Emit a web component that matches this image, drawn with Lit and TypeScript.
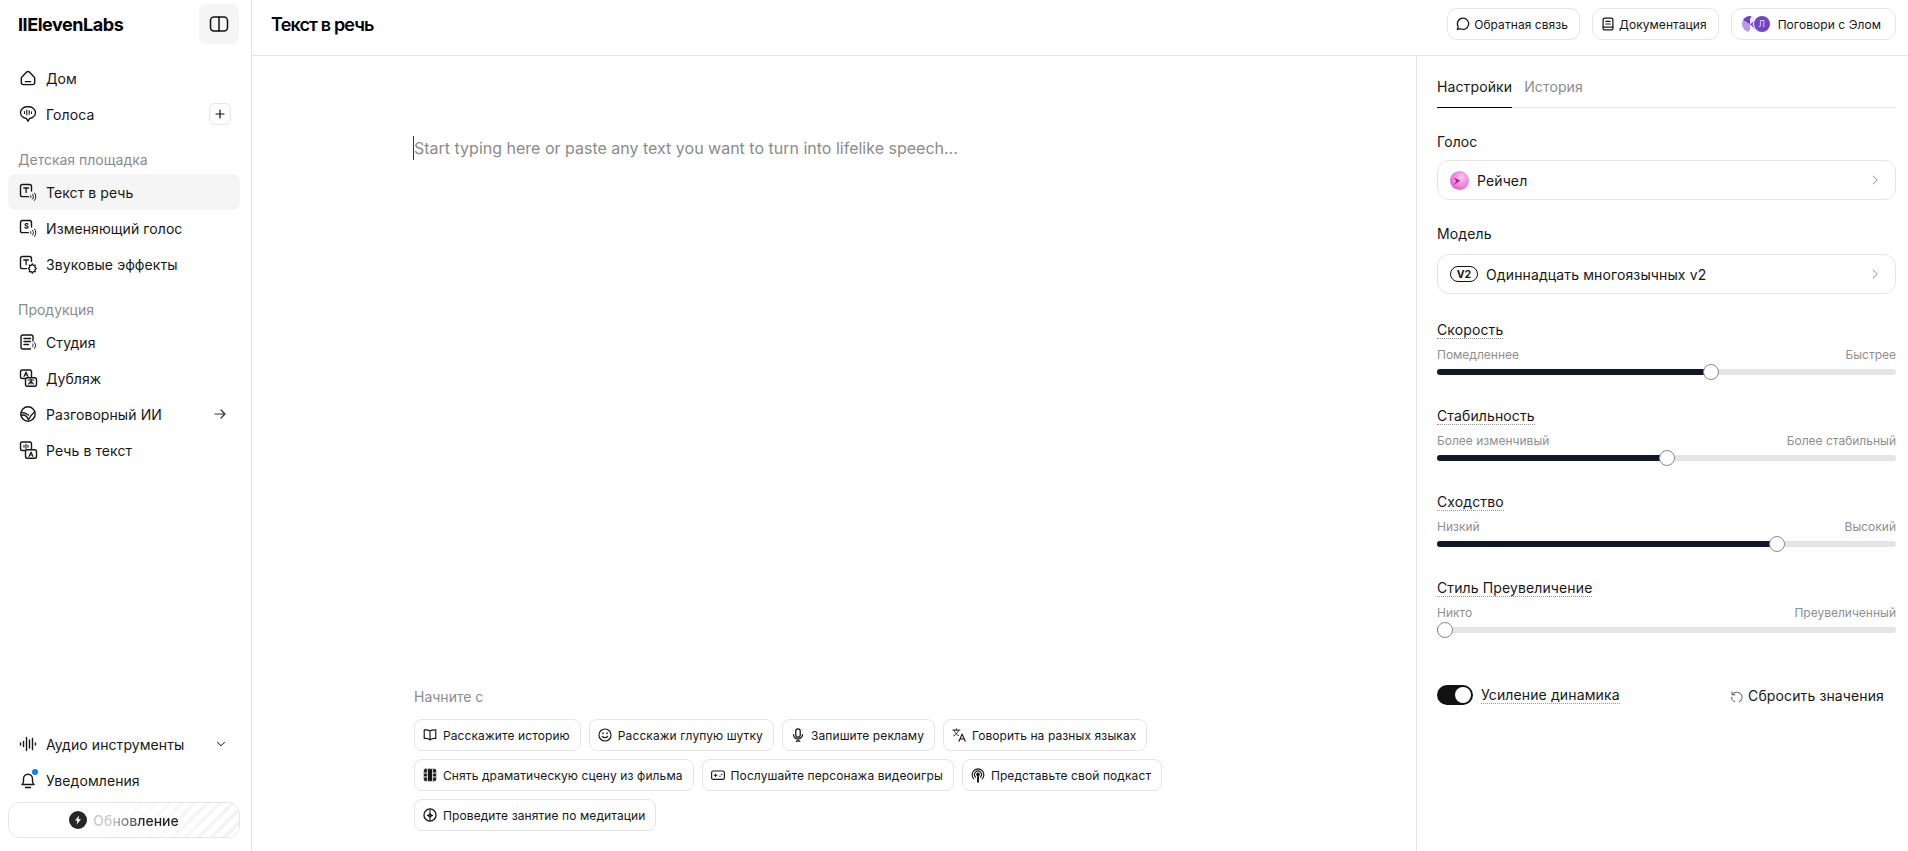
import { LitElement, html, css, svg, TemplateResult } from "lit";
import { customElement } from "lit/decorators.js";

const ic = (body: TemplateResult, size = 20, vb = 20, sw = 1.4) => html`<svg class="ic" width=${size} height=${size} viewBox="0 0 ${vb} ${vb}" fill="none" stroke="currentColor" stroke-width=${sw} stroke-linecap="round" stroke-linejoin="round">${body}</svg>`;

const waves = svg`<path d="M12.6 13.6c.5.6.5 1.6 0 2.2M14.6 12.3c1.1 1.4 1.1 3.4 0 4.8M16.6 11c1.6 2.2 1.6 5.2 0 7.4" stroke-width="1"/>`;
const box = svg`<path d="M10.5 14.6H4.4A1.9 1.9 0 0 1 2.5 12.7V4.4a1.9 1.9 0 0 1 1.9-1.9h7.2a1.9 1.9 0 0 1 1.9 1.9v4.6"/>`;

const icons: Record<string, TemplateResult> = {
  panel: ic(svg`<rect x="2.5" y="4" width="17" height="14" rx="3.5"/><path d="M11 4v14"/>`, 22, 22, 1.5),
  home: ic(svg`<path d="M3.7 9.2 8.4 4.2a2.2 2.2 0 0 1 3.2 0l4.7 5c.3.3.4.6.4 1v4.4a2 2 0 0 1-2 2H5.3a2 2 0 0 1-2-2v-4.4c0-.4.1-.7.4-1Z"/><path d="M7.3 13.6h5.4"/>`),
  voices: ic(svg`<path d="M10 2.5C5.7 2.5 2.500 5.200 2.500 8.600c0 3 2.700 5.300 5.800 5.800l1.700 2.800 1.700-2.800c3.100-.5 5.800-2.800 5.800-5.800 0-3.400-3.200-6.100-7.500-6.100Z"/><path d="M6.500 7.600v2M8.800 6v5M11.200 6.800v3.400M13.500 7.800v1.600" stroke-width="1.100"/>`),
  tts: ic(svg`${box}<path d="M5.800 6h4.600M8.100 6v4.600" stroke-width="1.300"/>${waves}`),
  vc: ic(svg`${box}<path d="M10 6.100c-.5-.6-2.900-.8-2.900.6 0 1.500 3 .8 3 2.300 0 1.400-2.500 1.200-3.200.5" stroke-width="1.200"/>${waves}`),
  sfx: ic(svg`<path d="M8.500 14.600H4.400A1.900 1.900 0 0 1 2.500 12.700V4.400a1.900 1.900 0 0 1 1.900-1.900h7.200a1.900 1.900 0 0 1 1.900 1.900v3"/><path d="M5.800 6h4.600M8.100 6v4.600" stroke-width="1.300"/><path d="m14.300 9.700 1 1.800 2-.3-.4 2 1.400 1.300-1.400 1.300.4 2-2-.3-1 1.800-1-1.800-2 .3.400-2-1.400-1.300 1.400-1.300-.4-2 2 .3Z" stroke-width="1.200"/>`),
  studio: ic(svg`<path d="M12.500 17H5a2 2 0 0 1-2-2V5a2 2 0 0 1 2-2h8a2 2 0 0 1 2 2v4"/><path d="M6 6.500h6.500M6 9.500h6.500M6 12.500h4.500"/><path d="M14.500 11.800c.8.9.8 2.400 0 3.300M16.500 10.500c1.400 1.700 1.400 4.300 0 6" stroke-width="1"/>`),
  dub: ic(svg`<rect x="2.500" y="2" width="11" height="8.500" rx="1.800"/><path d="m6 8.500 2-4.500 2 4.500M6.800 7h2.400" stroke-width="1.100"/><rect x="7.500" y="9.800" width="11" height="8.500" rx="1.800" fill="#fff"/><path d="M10 12h6M13 11v5M13 13.200l-2.500 3M13 13.200l2.500 3" stroke-width="1.100"/>`),
  conv: ic(svg`<circle cx="10" cy="10" r="7.200"/><path d="M3 11.200c3.500-.8 6 .8 7.500 4.500 1.600-3.500 3.300-5.500 6.200-8" /><path d="M3.300 8.500c2.800 0 5 .8 7.200 2.500"/>`),
  stt: ic(svg`<rect x="2.500" y="2" width="11" height="8.500" rx="1.800"/><path d="M8 4v4.500M6 5.200v2M10 5.200v2" stroke-width="1.100"/><rect x="7.500" y="9.800" width="11" height="8.500" rx="1.800" fill="#fff"/><path d="m11 16.500 2-4.500 2 4.500M11.800 15h2.400" stroke-width="1.100"/>`),
  audio: ic(svg`<path d="M2.500 9v2M5.500 7.500v5M8.500 3.500v13M11.500 6v8M14.500 4.500v11M17.500 9v2"/>`),
  bell: ic(svg`<path d="M4 14.500c.9-.8 1.500-1.800 1.500-3.200V8.800a4.500 4.500 0 0 1 9 0v2.500c0 1.400.6 2.400 1.500 3.200H4Z"/><path d="M7.500 17.500h5"/>`),
  plus: ic(svg`<path d="M8 3.500v9M3.500 8h9"/>`, 14, 16, 1.4),
  arrow: ic(svg`<path d="M3 8h10M9 4l4 4-4 4"/>`, 16, 16, 1.2),
  down: ic(svg`<path d="m4 6 4 4 4-4"/>`, 14, 16, 1.2),
  chev: ic(svg`<path d="m6 3.500 4.500 4.500L6 12.500"/>`, 14, 16, 1.2),
  msg: ic(svg`<path d="M9 2.500a6.300 6.300 0 1 1-3 11.800l-3.300.9.900-3.100A6.300 6.300 0 0 1 9 2.500Z"/>`, 16, 18, 1.4),
  doc: ic(svg`<rect x="3.500" y="2.500" width="11" height="13" rx="1.500"/><path d="M6.500 6h5M6.500 9h5M3.500 12.500h11"/>`, 16, 18, 1.4),
  book: ic(svg`<path d="M9 4.600C7.800 3.500 6 3 2.500 3.200v9.600c3.500-.2 5.300.3 6.500 1.700 1.200-1.400 3-1.900 6.500-1.700V3.200C12 3 10.200 3.500 9 4.600ZM9 4.600v9.900"/>`, 16, 18, 1.3),
  smile: ic(svg`<circle cx="9" cy="9" r="6.800"/><path d="M6 10.500c1.400 2 4.600 2 6 0"/><path d="M6.700 6.800v.6M11.300 6.800v.6" stroke-width="1.600"/>`, 16, 18, 1.3),
  mic: ic(svg`<rect x="6.500" y="2" width="5" height="9.500" rx="2.500"/><path d="M4 8.500a5 5 0 0 0 10 0M9 13.500v2.500M7 16h4"/>`, 16, 18, 1.4),
  lang: ic(svg`<path d="M2 3.500h8M6 2v1.500M3.500 3.500c.6 2.600 2.500 5 5 6.200M8.500 3.500c-.6 2.600-2.300 4.800-5.500 6.500" stroke-width="1"/><path d="m9 16 3.500-8 3.500 8M10.200 13.500h4.600" stroke-width="1.300"/>`, 16, 18, 1.3),
  film: ic(svg`<rect x="2.500" y="2.500" width="13" height="13" rx="1.500" fill="currentColor"/><path d="M6 2.500v13M12 2.500v13M2.500 6.800H6M2.500 11.200H6M12 6.800h3.500M12 11.200h3.500" stroke="#fff" stroke-width="1"/>`, 16, 18, 1),
  game: ic(svg`<rect x="1.800" y="4.500" width="14.400" height="9.500" rx="2"/><path d="M4.800 9.200h3M6.300 7.800v2.800M11 10.300h.4M13 8.300h.4" stroke-width="1.200"/>`, 16, 18, 1.3),
  pod: ic(svg`<path d="M4.300 13.300a6.600 6.600 0 1 1 9.400 0"/><path d="M6.200 11.300a3.900 3.900 0 1 1 5.600 0"/><circle cx="9" cy="8.300" r="1.400" fill="currentColor"/><path d="M9 11v5.500" stroke-width="2.200"/>`, 16, 18, 1.3),
  med: ic(svg`<circle cx="9" cy="9" r="6.800"/><path d="M9 2.500v13M6 9.500c1.800-.2 3-1.200 3-3 0 1.800 1.200 2.800 3 3-1.800.2-3 1.200-3 3 0-1.800-1.200-2.800-3-3Z" stroke-width="1.200"/>`, 16, 18, 1.5),
  reset: ic(svg`<path d="M3.500 4.500v3.300h3.300M3.900 7.500A6 6 0 1 1 3 10.500"/>`, 14, 16, 1.1),
};

const chips = [
  ["book", "Расскажите историю"], ["smile", "Расскажи глупую шутку"], ["mic", "Запишите рекламу"], ["lang", "Говорить на разных языках"],
  ["film", "Снять драматическую сцену из фильма"], ["game", "Послушайте персонажа видеоигры"], ["pod", "Представьте свой подкаст"],
  ["med", "Проведите занятие по медитации"],
];

const sliders = [
  ["Скорость", "Помедленнее", "Быстрее", 0.6],
  ["Стабильность", "Более изменчивый", "Более стабильный", 0.5],
  ["Сходство", "Низкий", "Высокий", 0.75],
  ["Стиль Преувеличение", "Никто", "Преувеличенный", 0],
] as const;

@customElement("app-root")
export class AppRoot extends LitElement {
  static styles = css`
    :host { display: flex; height: 100vh; min-height: 851px; font-family: Inter, "Liberation Sans", sans-serif; font-size: 14px; color: #000; background: #fff; overflow: hidden; }
    * { box-sizing: border-box; }
    .ic { display: block; flex: none; }
    .side { width: 252px; flex: none; border-right: 1px solid #e5e5e5; display: flex; flex-direction: column; padding: 0 11px 13px 8px; }
    .brand { height: 56px; display: flex; align-items: center; justify-content: space-between; padding: 0 1px 8px 10px; margin-bottom: 4px; }
    .logo { font-size: 18px; font-weight: 700; letter-spacing: -0.45px; }
    .toggle { width: 40px; height: 40px; border-radius: 8px; background: #f5f5f5; display: flex; align-items: center; justify-content: center; color: #111; }
    .row { height: 36px; display: flex; align-items: center; gap: 8px; padding: 0 10px; border-radius: 8px; color: #171717; letter-spacing: 0.08px; }
    .row.on { background: #f5f5f5; }
    .row .end { margin-left: auto; margin-right: 2px; color: #333; }
    .row .end.box { width: 22px; height: 22px; border: 1px solid #e5e5e5; border-radius: 6px; display: flex; align-items: center; justify-content: center; margin-right: -1px; color: #111; }
    .sect { color: #8c8c8c; padding: 0 10px; margin-top: 19px; height: 18px; line-height: 18px; margin-bottom: 5px; }
    .grow { flex: 1; }
    .bell { position: relative; display: block; }
    .bell i { position: absolute; top: -1px; right: 0; width: 6px; height: 6px; border-radius: 50%; background: #0a7cff; }
    .up { position: relative; margin-top: 4px; height: 36px; border: 1px solid #e5e5e5; border-radius: 12px; display: flex; align-items: center; justify-content: center; gap: 6px; font-weight: 500; overflow: hidden; background: #fff; }
    .up::before { content: ""; position: absolute; inset: 0 0 0 35%; background: repeating-linear-gradient(135deg, #f3f3f3 0 4px, #fff 4px 9px); -webkit-mask-image: linear-gradient(90deg, transparent, #000); mask-image: linear-gradient(90deg, transparent, #000); }
    .bolt { position: relative; width: 18px; height: 18px; border-radius: 50%; background: #27272a; display: flex; align-items: center; justify-content: center; }
    .uptext { position: relative; background: linear-gradient(90deg, #c8c8c8 0 22%, #222 60%); -webkit-background-clip: text; background-clip: text; color: transparent; }
    .main { flex: 1; min-width: 0; display: flex; flex-direction: column; }
    header { height: 56px; flex: none; border-bottom: 1px solid #e5e5e5; display: flex; align-items: center; padding: 0 12px 7px 19px; gap: 12px; }
    h1 { margin: 0; font-size: 18px; font-weight: 600; letter-spacing: -0.85px; margin-right: auto; }
    .hbtn { height: 32px; padding: 0 11px 0 7px; border: 1px solid #e5e5e5; border-radius: 10px; display: flex; align-items: center; gap: 3px; font-size: 12px; color: #171717; letter-spacing: 0.06px; }
    .hbtn.talk { padding: 0 14px 0 10px; gap: 8px; }
    .avs { display: flex; align-items: center; }
    .av1 { width: 16px; height: 16px; border-radius: 50%; background: conic-gradient(from 300deg, #6d42c7 0 18%, #efe6ff 18% 30%, #8a63d8 30% 55%, #fff 55% 68%, #b79be8 68%); }
    .av2 { width: 16px; height: 16px; border-radius: 50%; background: #6f46c4; color: #e8defa; font-size: 8.5px; display: flex; align-items: center; justify-content: center; margin-left: -4px; position: relative; box-shadow: 0 0 0 1px #fff; }
    .body { flex: 1; display: flex; min-height: 0; }
    .editor { flex: 1; min-width: 0; display: flex; flex-direction: column; padding: 80px 20px 20px 161px; }
    .ph { font-size: 16px; line-height: 24px; color: #8b8b8b; border-left: 1px solid #333; width: fit-content; }
    .start { margin-top: auto; margin-left: 1px; color: #8c8c8c; font-size: 14px; line-height: 18px; margin-bottom: 13px; }
    .chips { display: flex; flex-wrap: wrap; gap: 8px; max-width: 800px; margin-left: 1px; }
    .chip { height: 32px; padding: 0 10px 0 7px; border: 1px solid #e5e5e5; border-radius: 8px; display: flex; align-items: center; gap: 5px; font-size: 12px; color: #171717; letter-spacing: 0.1px; }
    .panel { width: 492px; flex: none; border-left: 1px solid #e5e5e5; padding: 15px 12px 0 20px; display: flex; flex-direction: column; letter-spacing: 0.12px; }
    .tabs { display: flex; gap: 12px; border-bottom: 1px solid #e5e5e5; height: 37px; margin-bottom: 24px; }
    .tab { color: #8c8c8c; line-height: 31px; }
    .tab.on { color: #171717; border-bottom: 1px solid #000; height: 37px; }
    .lab { line-height: 20px; color: #171717; height: 20px; }
    .sel { height: 40px; margin-top: 8px; margin-bottom: 24px; border: 1px solid #e5e5e5; border-radius: 12px; display: flex; align-items: center; padding: 0 13px 0 12px; gap: 8px; color: #171717; }
    .sel.model { margin-top: 10px; margin-bottom: 27px; }
    .sel .chev { margin-left: auto; color: #a3a3a3; }
    .v2 { font-size: 10.5px; font-weight: 700; height: 16px; width: 28px; border: 1.3px solid #111; border-radius: 8px; display: flex; align-items: center; justify-content: center; letter-spacing: 0; }
    .sl { margin-bottom: 32px; }
    .sl .ttl { display: inline-block; line-height: 16px; border-bottom: 1px dotted #999; color: #171717; }
    .sub { display: flex; justify-content: space-between; font-size: 12px; color: #8f8f8f; line-height: 16px; margin-top: 8px; letter-spacing: 0; }
    .track { position: relative; height: 6px; margin-top: 6px; border-radius: 3px; background: #e5e5e5; }
    .fill { position: absolute; left: 0; top: 0; bottom: 0; border-radius: 3px; background: #111827; }
    .th { position: absolute; top: -5px; width: 16px; height: 16px; border-radius: 50%; background: #fff; border: 1px solid #8a8a8a; }
    .foot { display: flex; align-items: center; margin-top: 20px; height: 20px; }
    .sw { width: 36px; height: 20px; border-radius: 10px; background: #111; position: relative; flex: none; }
    .sw::after { content: ""; position: absolute; right: 2px; top: 2px; width: 16px; height: 16px; border-radius: 50%; background: #fff; }
    .swl { margin-left: 8px; line-height: 17px; border-bottom: 1px dotted #999; color: #171717; }
    .reset { margin-left: auto; margin-right: 12px; display: flex; align-items: center; gap: 5px; color: #171717; }
    .reset .ic { color: #555; }
  `;

  private nav(icon: string, label: string, end?: TemplateResult, on = false) {
    return html`<div class="row ${on ? "on" : ""}">${icons[icon]}<span>${label}</span>${end ?? ""}</div>`;
  }

  render() {
    return html`
      <aside class="side">
        <div class="brand"><span class="logo">IIElevenLabs</span><div class="toggle">${icons.panel}</div></div>
        ${this.nav("home", "Дом")}
        ${this.nav("voices", "Голоса", html`<span class="end box">${icons.plus}</span>`)}
        <div class="sect">Детская площадка</div>
        ${this.nav("tts", "Текст в речь", undefined, true)}
        ${this.nav("vc", "Изменяющий голос")}
        ${this.nav("sfx", "Звуковые эффекты")}
        <div class="sect">Продукция</div>
        ${this.nav("studio", "Студия")}
        ${this.nav("dub", "Дубляж")}
        ${this.nav("conv", "Разговорный ИИ", html`<span class="end">${icons.arrow}</span>`)}
        ${this.nav("stt", "Речь в текст")}
        <div class="grow"></div>
        ${this.nav("audio", "Аудио инструменты", html`<span class="end">${icons.down}</span>`)}
        <div class="row"><span class="bell">${icons.bell}<i></i></span><span>Уведомления</span></div>
        <div class="up">
          <span class="bolt"><svg width="10" height="10" viewBox="0 0 10 10"><path d="M6 .5 2 5.6h2.300L3.700 9.500 8 4.200H5.500Z" fill="#fff"/></svg></span>
          <span class="uptext">Обновление</span>
        </div>
      </aside>
      <div class="main">
        <header>
          <h1>Текст в речь</h1>
          <div class="hbtn">${icons.msg}Обратная связь</div>
          <div class="hbtn">${icons.doc}Документация</div>
          <div class="hbtn talk"><span class="avs"><span class="av1"></span><span class="av2">Л</span></span>Поговори с Элом</div>
        </header>
        <div class="body">
          <section class="editor">
            <div class="ph">Start typing here or paste any text you want to turn into lifelike speech...</div>
            <div class="start">Начните с</div>
            <div class="chips">${chips.map(([i, t]) => html`<div class="chip">${icons[i]}<span>${t}</span></div>`)}</div>
          </section>
          <aside class="panel">
            <div class="tabs"><div class="tab on">Настройки</div><div class="tab">История</div></div>
            <div class="lab">Голос</div>
            <div class="sel">
              <svg class="ic" width="19" height="19" viewBox="0 0 19 19">
                <defs><radialGradient id="orb" cx="0.6" cy="0.35" r="0.8"><stop offset="0" stop-color="#f4c8ee"/><stop offset="0.6" stop-color="#ea7fdc"/><stop offset="1" stop-color="#d845bc"/></radialGradient></defs>
                <circle cx="9.5" cy="9.5" r="9.5" fill="url(#orb)"/>
                <path d="M3.500 6.500 10 9.500l-6 4.500 2.500-4Z" fill="#b80f82"/>
              </svg>
              Рейчел<span class="chev">${icons.chev}</span>
            </div>
            <div class="lab">Модель</div>
            <div class="sel model"><span class="v2">V2</span>Одиннадцать многоязычных v2<span class="chev">${icons.chev}</span></div>
            ${sliders.map(([t, a, b, v]) => html`
              <div class="sl">
                <span class="ttl">${t}</span>
                <div class="sub"><span>${a}</span><span>${b}</span></div>
                <div class="track">
                  <div class="fill" style="width:calc(8px + (100% - 16px) * ${v})"></div>
                  <div class="th" style="left:calc((100% - 16px) * ${v})"></div>
                </div>
              </div>`)}
            <div class="foot">
              <span class="sw"></span><span class="swl">Усиление динамика</span>
              <span class="reset">${icons.reset}Сбросить значения</span>
            </div>
          </aside>
        </div>
      </div>
    `;
  }
}
